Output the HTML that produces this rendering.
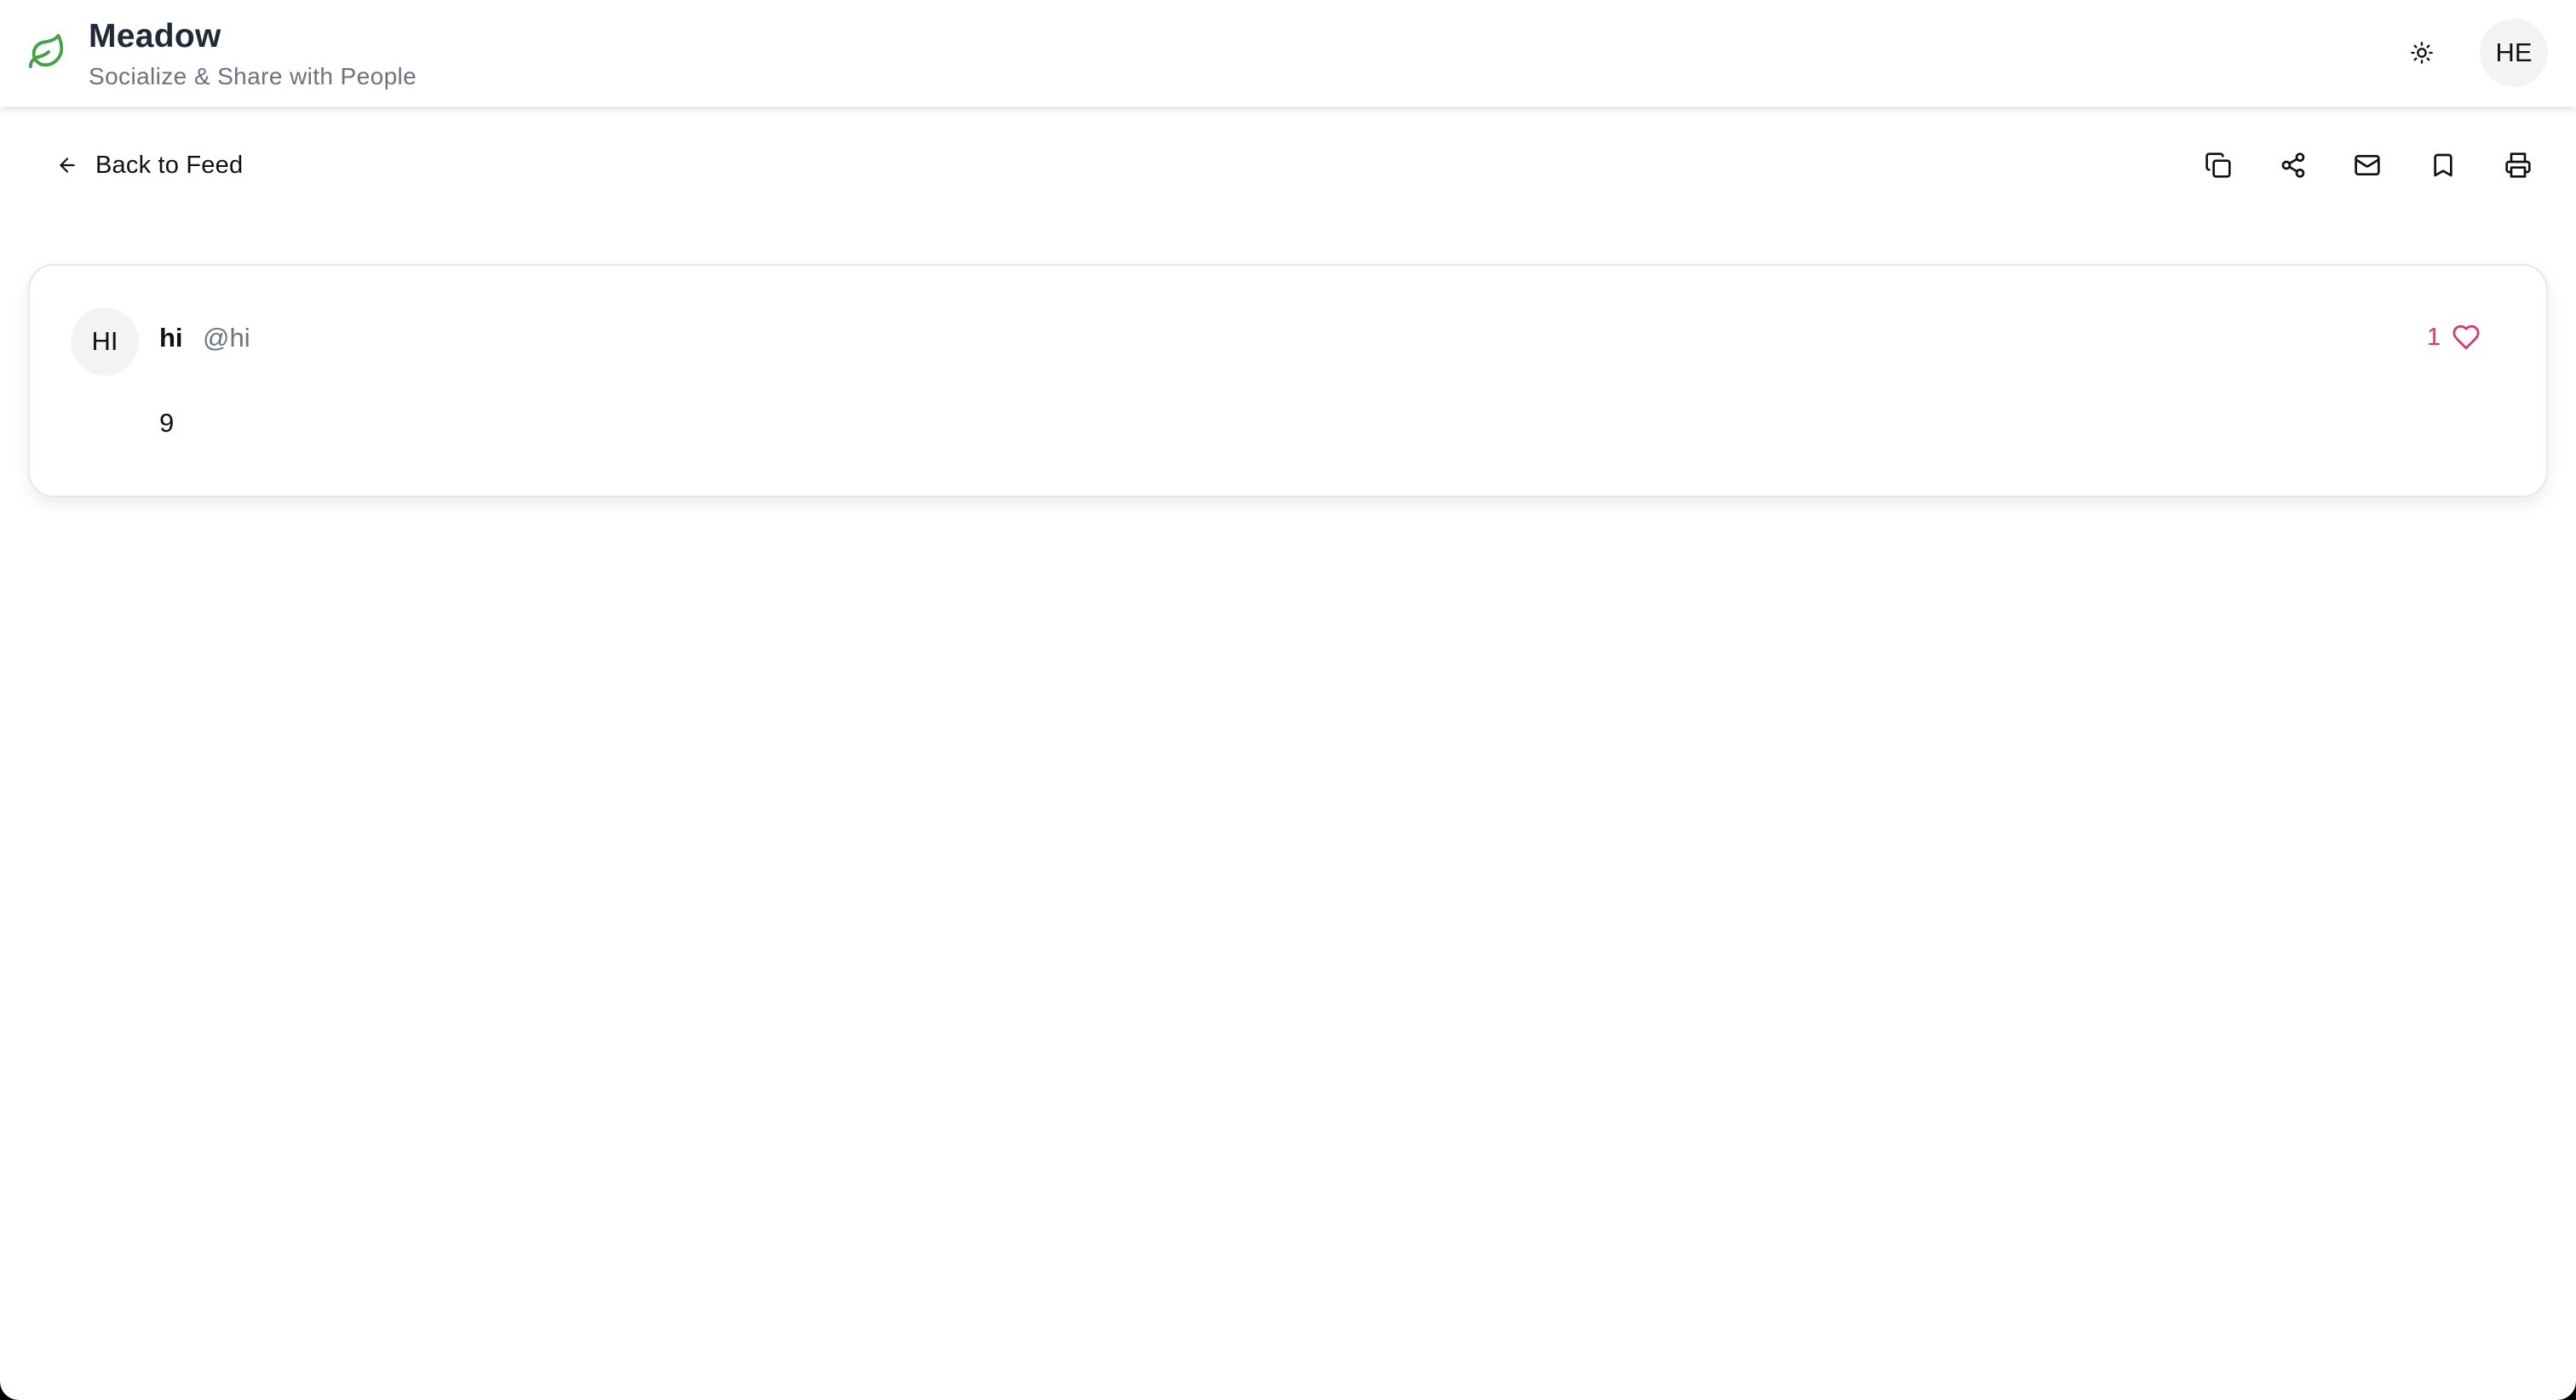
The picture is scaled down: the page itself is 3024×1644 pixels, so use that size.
<!DOCTYPE html>
<html><head><meta charset="utf-8"><style>
html,body{margin:0;padding:0;width:3024px;height:1644px;overflow:hidden;background:#000;}
#page{position:absolute;left:0;top:0;width:3024px;height:1644px;background:#fff;border-radius:0 0 22px 22px;overflow:hidden;font-family:"Liberation Sans",sans-serif;color:#111;}
.hdr{position:absolute;left:0;top:0;width:3024px;height:125px;background:#fff;box-shadow:0 4px 10px rgba(0,0,0,0.12);z-index:2;}
.abs{position:absolute;}
.card{position:absolute;left:33px;top:310px;width:2958px;height:274px;border:2px solid #e5e7eb;border-radius:30px;box-sizing:border-box;box-shadow:0 8px 20px rgba(0,0,0,0.08);background:#fff;}
.av{position:absolute;border-radius:50%;background:#f3f3f3;display:flex;align-items:center;justify-content:center;font-size:31px;color:#111;}
svg{position:absolute;}
</style></head><body><div id="page">
<div class="hdr">
<svg style="left:32px;top:38px" width="46" height="46" viewBox="0 0 24 24" fill="none" stroke="#43a047" stroke-width="2" stroke-linecap="round" stroke-linejoin="round"><path d="M11 20A7 7 0 0 1 9.8 6.1C15.5 5 17 4.48 19 2c1 2 2 4.18 2 8 0 5.5-4.78 10-10 10Z"/><path d="M2 21c0-3 1.85-5.36 5.08-6C9.5 14.52 12 13 13 12"/></svg>
<div class="abs" style="left:104px;top:21px;font-size:39px;font-weight:bold;color:#1f2937;letter-spacing:0.3px;">Meadow</div>
<div class="abs" style="left:104px;top:74px;font-size:28px;color:#6b7280;letter-spacing:0.4px;">Socialize &amp; Share with People</div>
<svg style="left:2829px;top:48px" width="28" height="28" viewBox="0 0 24 24" fill="none" stroke="#111" stroke-width="2" stroke-linecap="round"><circle cx="12" cy="12" r="4"/><path d="M12 2v2M12 20v2M4.93 4.93l1.41 1.41M17.66 17.66l1.41 1.41M2 12h2M20 12h2M6.34 17.66l-1.41 1.41M19.07 4.93l-1.41 1.41"/></svg>
<div class="av" style="left:2911px;top:22px;width:80px;height:80px;">HE</div>
</div>
<svg style="left:66px;top:181px" width="26" height="26" viewBox="0 0 24 24" fill="none" stroke="#111" stroke-width="2" stroke-linecap="round" stroke-linejoin="round"><path d="M19 12H5M12 19l-7-7 7-7"/></svg>
<div class="abs" style="left:112px;top:178px;font-size:29px;font-weight:500;color:#111;letter-spacing:0.2px;">Back to Feed</div>
<svg style="left:2588px;top:178px" width="32" height="32" viewBox="0 0 24 24" fill="none" stroke="#111" stroke-width="2" stroke-linecap="round" stroke-linejoin="round"><rect x="8" y="8" width="14" height="14" rx="2"/><path d="M4 16c-1.1 0-2-.9-2-2V4c0-1.1.9-2 2-2h10c1.1 0 2 .9 2 2"/></svg>
<svg style="left:2676px;top:178px" width="32" height="32" viewBox="0 0 24 24" fill="none" stroke="#111" stroke-width="2" stroke-linecap="round" stroke-linejoin="round"><circle cx="18" cy="5" r="3"/><circle cx="6" cy="12" r="3"/><circle cx="18" cy="19" r="3"/><path d="M8.59 13.51l6.83 3.98M15.41 6.51l-6.82 3.98"/></svg>
<svg style="left:2763px;top:178px" width="32" height="32" viewBox="0 0 24 24" fill="none" stroke="#111" stroke-width="2" stroke-linecap="round" stroke-linejoin="round"><rect x="2" y="4" width="20" height="16" rx="2"/><path d="M22 7l-8.97 5.7a1.94 1.94 0 0 1-2.06 0L2 7"/></svg>
<svg style="left:2852px;top:178px" width="32" height="32" viewBox="0 0 24 24" fill="none" stroke="#111" stroke-width="2" stroke-linecap="round" stroke-linejoin="round"><path d="M19 21l-7-4-7 4V5a2 2 0 0 1 2-2h10a2 2 0 0 1 2 2v16z"/></svg>
<svg style="left:2940px;top:178px" width="32" height="32" viewBox="0 0 24 24" fill="none" stroke="#111" stroke-width="2" stroke-linecap="round" stroke-linejoin="round"><path d="M6 9V2h12v7"/><path d="M6 18H4a2 2 0 0 1-2-2v-5a2 2 0 0 1 2-2h16a2 2 0 0 1 2 2v5a2 2 0 0 1-2 2h-2"/><rect x="6" y="14" width="12" height="8"/></svg>
<div class="card">
<div class="av" style="left:48px;top:49px;width:80px;height:80px;">HI</div>
<div class="abs" style="left:152px;top:67px;font-size:31px;font-weight:bold;color:#111;">hi</div>
<div class="abs" style="left:203px;top:67px;font-size:31px;color:#6b7280;">@hi</div>
<div class="abs" style="left:152px;top:167px;font-size:31px;color:#111;">9</div>
<div class="abs" style="left:2814px;top:68px;font-size:29px;color:#d23a72;">1</div>
<svg style="left:2843px;top:67px" width="34" height="34" viewBox="0 0 24 24" fill="none" stroke="#d23a72" stroke-width="2" stroke-linecap="round" stroke-linejoin="round"><path d="M19 14c1.49-1.46 3-3.21 3-5.5A5.5 5.5 0 0 0 16.5 3c-1.76 0-3 .5-4.5 2-1.5-1.5-2.74-2-4.5-2A5.5 5.5 0 0 0 2 8.5c0 2.3 1.5 4.05 3 5.5l7 7Z"/></svg>
</div>
</div></body></html>
